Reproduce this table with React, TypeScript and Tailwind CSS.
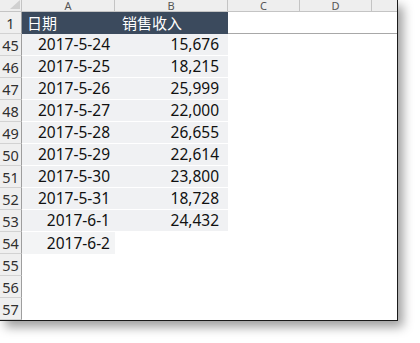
import React from "react";

const rows: [number, string, string][] = [
  [45, "2017-5-24", "15,676"],
  [46, "2017-5-25", "18,215"],
  [47, "2017-5-26", "25,999"],
  [48, "2017-5-27", "22,000"],
  [49, "2017-5-28", "26,655"],
  [50, "2017-5-29", "22,614"],
  [51, "2017-5-30", "23,800"],
  [52, "2017-5-31", "18,728"],
  [53, "2017-6-1", "24,432"],
];

const font = { fontFamily: '"Noto Sans", "Open Sans", sans-serif' };
const cjk = { fontFamily: '"Noto Sans", "Noto Sans CJK SC", sans-serif' };

function RowHead({ n }: { n: number }) {
  return (
    <div className="w-[22px] h-[22px] shrink-0 bg-[#efefef] border-r border-r-[#9e9e9e] border-b border-b-[#d2d2d2] flex items-end justify-center pb-[1px] text-[14.5px] leading-[18px] text-[#303030]" style={font}>
      {n}
    </div>
  );
}

export default function App() {
  return (
    <div className="w-[420px] h-[343px] bg-white relative overflow-hidden">
      <div className="w-[398px] h-[321px] bg-white border-r border-b border-[#1a1a1a] shadow-[5px_6px_10px_rgba(0,0,0,0.38)] flex flex-col overflow-hidden">
        {/* column headers */}
        <div className="flex h-[12px] shrink-0 bg-[#eeeeee] border-b border-[#c4c4c4] text-[#555] text-[11px] leading-[11px]" style={font}>
          <div className="w-[22px] shrink-0 border-r border-[#c4c4c4] relative">
            <svg className="absolute left-[10px] top-0" width="10" height="9" viewBox="0 0 10 9">
              <polygon points="10,0 10,9 0,9" fill="#d0d0d0" />
            </svg>
          </div>
          {[
            ["A", "w-[93px]"],
            ["B", "w-[113px]"],
            ["C", "w-[72px]"],
            ["D", "w-[72px]"],
          ].map(([l, w]) => (
            <div key={l} className={`${w} shrink-0 border-r border-[#c4c4c4] flex justify-center items-start`}>
              {l}
            </div>
          ))}
          <div className="flex-1" />
        </div>
        {/* row 1 */}
        <div className="flex h-[22px] shrink-0">
          <RowHead n={1} />
          <div className="w-[93px] shrink-0 bg-[#3b4a5d] text-white text-[15px] leading-[22px] pl-[5px]" style={cjk}>日期</div>
          <div className="w-[113px] shrink-0 bg-[#3b4a5d] text-white text-[15px] leading-[22px] pl-[7px]" style={cjk}>销售收入</div>
          <div className="flex-1 border-b border-[#a8a8a8]" />
        </div>
        {rows.map(([n, d, v]) => (
          <div key={n} className="flex h-[22px] shrink-0">
            <RowHead n={n} />
            <div className="w-[93px] shrink-0 bg-[#f0f1f3] border-b border-white flex items-end justify-end pr-[5px] pb-[1px] text-[15.5px] leading-[20px] text-[#111]" style={font}>{d}</div>
            <div className="w-[113px] shrink-0 bg-[#f0f1f3] border-b border-white flex items-end justify-end pr-[9px] pb-[1px] text-[15.5px] leading-[20px] text-[#111]" style={font}>{v}</div>
            <div className="flex-1" />
          </div>
        ))}
        <div className="flex h-[22px] shrink-0">
          <RowHead n={54} />
          <div className="w-[93px] shrink-0 bg-[#f3f4f5] flex items-end justify-end pr-[5px] pb-[1px] text-[15.5px] leading-[20px] text-[#111]" style={font}>2017-6-2</div>
          <div className="flex-1" />
        </div>
        {[55, 56, 57].map((n) => (
          <div key={n} className="flex h-[22px] shrink-0">
            <RowHead n={n} />
            <div className="flex-1" />
          </div>
        ))}
      </div>
    </div>
  );
}
